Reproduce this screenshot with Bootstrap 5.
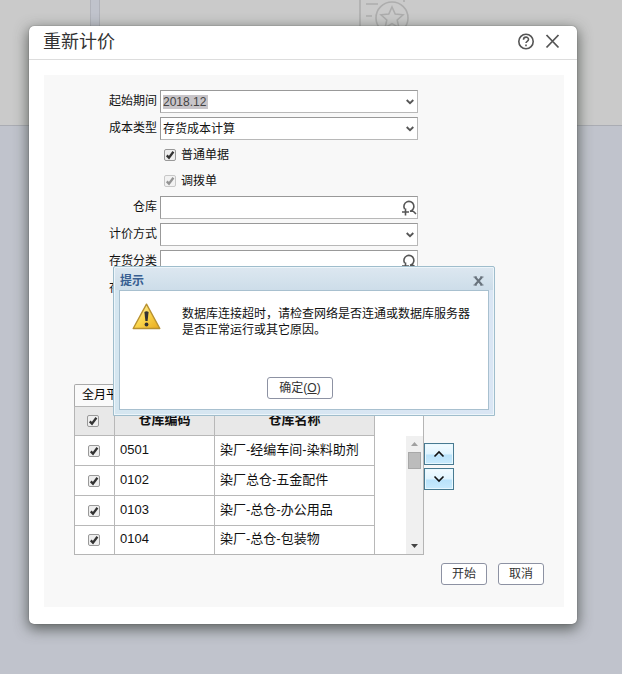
<!DOCTYPE html>
<html lang="zh-CN">
<head>
<meta charset="utf-8">
<meta name="viewport" content="width=device-width, initial-scale=1">
<title>重新计价</title>
<link href="https://cdn.jsdelivr.net/npm/bootstrap@5.3.0/dist/css/bootstrap.min.css" rel="stylesheet">
<style>
body{background:#c0c3cc;font:12px/16px "Liberation Sans","Noto Sans CJK SC",sans-serif;color:#111;min-height:100vh}
.backdrop-strip{z-index:0}
.pane{background:#cacaca;border-bottom:1px solid #aaacb3;height:126px}
.pane-left{width:91px;border-right:1px solid #b0b2ba}
.pane-right{border-left:1px solid #b0b2ba;padding-left:259px}
.page-wrap{padding:26px 45px 50px 29px}
.main-dialog{background:#fff;border-radius:5px;box-shadow:0 0 1px #444,0 4px 14px 1px rgba(50,55,50,.7);z-index:1}
.main-head{height:34px;border-bottom:1px solid #ddd;padding:0 15px 2px 14px}
.main-head h1{font-size:18px;line-height:28px;color:#333}
.icon-btn{border:0;background:none;padding:0;display:flex}
.main-body{padding:15px 13px 17px 15px}
.form-panel{background:#f8f8f8;padding:15px 20px 22px 0}
.field-rows{gap:4px;padding-right:126px}
.field-row{gap:3px}
.field-row>label{width:113px;text-align:right;line-height:22px;flex:none}
.field-row>.ctl{flex:1;min-width:0;height:23px;border:1px solid #b8b8b8;border-top-color:#999;border-left-color:#999;border-radius:0;padding:1px 24px 0 2px;font-size:12px;line-height:20px;color:#111;background-color:#fff}
.ctl-select{background:url("data:image/svg+xml,%3Csvg xmlns='http://www.w3.org/2000/svg' viewBox='0 0 8 6'%3E%3Cpath d='M.7 1 4 4.2 7.3 1' fill='none' stroke='%23555' stroke-width='1.8'/%3E%3C/svg%3E") no-repeat right 3px center/8px 6px}
.field-row>.ctl-marked{color:#444;background:url("data:image/svg+xml,%3Csvg xmlns='http://www.w3.org/2000/svg' viewBox='0 0 8 6'%3E%3Cpath d='M.7 1 4 4.2 7.3 1' fill='none' stroke='%23555' stroke-width='1.8'/%3E%3C/svg%3E") no-repeat right 3px center/8px 6px,linear-gradient(#c8c5c9,#c8c5c9) no-repeat 2px 4px/45px 14px,#fff}
.lookup-btn{right:1px;top:4px}
.tick-row{height:22px;padding-left:120px;gap:5px}
.tick{appearance:none;width:12px;height:12px;margin:0;flex:none;border:1px solid #999;border-radius:2px;background:#eee url("data:image/svg+xml,%3Csvg xmlns='http://www.w3.org/2000/svg' viewBox='0 0 10 10'%3E%3Cpath d='M1.8 5.4 4 7.8 8.4 1.8' fill='none' stroke='%23333' stroke-width='2.3'/%3E%3C/svg%3E") center/10px}
.tick:disabled{opacity:.5}
.grid-area{margin:84px 90px 0 30px}
.tab-btn{height:22px;border:1px solid #aaa;border-bottom:0;border-radius:2px 2px 0 0;background:#fafafa;padding:0 7px 2px;font-size:12px}
.grid-frame{border:1px solid #b5b5b5;background:#fff}
.grid-table{font-size:13px;line-height:18px;border-collapse:separate;border-spacing:0;table-layout:fixed;margin-right:31px}
.grid-table th,.grid-table td{height:30px;padding:0 5px 2px;border-right:1px solid #b8b8b8;border-bottom:1px solid #b8b8b8;white-space:nowrap}
.grid-table th{background:#e8e8e8;text-align:center;height:29px}
.grid-table tbody tr:last-child td{border-bottom:0;height:28px}
.grid-table th:first-child{padding:0 0 0 12px}
.grid-table td:first-child{padding:0 0 0 13px}
.col-check{width:40px}.col-code{width:100px}
.track{width:17px;margin-top:29px;background:#f0f0f0;padding:6px 2px}
.thumb{width:13px;height:17px;margin-top:6px;background:#bcbcbc;border:1px solid #a8a8a8}
.order-btns{gap:3px;margin-top:59px}
.order-btn{width:30px;height:22px;border:1px solid #487a91;box-shadow:inset 0 0 0 1px #e8f8ff;background:linear-gradient(#f3fbff 0,#dff4ff 52%,#b9e2fa 53%,#c8eafd);padding:0}
.foot-btns{gap:11px;margin-top:8px}
.soft-btn{height:22px;border:1px solid #8d92a3;border-radius:3px;background:#fff;font-size:12px;line-height:20px;color:#333;padding:0 10px}
.prompt{left:84px;right:82px;top:240px;z-index:5;border:1px solid #9fbdcc;border-radius:2px 2px 0 0;background:linear-gradient(90deg,#d5e6f0,#dae6f4);padding:0 5px 5px;box-shadow:inset 0 0 0 1px #edf5fa}
.prompt-head{height:22px;padding:4px 9px 0 5px;background:linear-gradient(#dce7f0,#cddde9);margin:1px -4px 0}
.prompt-head h2{font-size:12px;line-height:18px;color:#385f91}
.prompt-body{background:#fff;border:1px solid #a8c0cf;padding:12px 16px 10px 12px}
.prompt-body p{line-height:16px;padding-top:3px}
.prompt-msg{gap:21px}
.ok-btn{margin-top:39px;margin-right:4px;padding:0 11px}
</style>
<script src="https://cdn.jsdelivr.net/npm/bootstrap@5.3.0/dist/js/bootstrap.bundle.min.js"></script>
</head>
<body>
<div class="backdrop-strip position-absolute top-0 start-0 w-100 d-flex" aria-hidden="true">
  <div class="pane pane-left me-2"></div>
  <div class="pane pane-right flex-grow-1">
    <svg width="54" height="30" viewBox="0 0 54 30" fill="none" stroke="#adadad" stroke-width="1.6"><path d="M1 0V30M7 4H19M7 16H13M45 0V2"/><circle cx="33" cy="18" r="16"/><path d="m33 7 3.200 7 7.800.8-5.800 5.200 1.700 7.600-6.900-4-6.900 4 1.700-7.600L22 14.800l7.800-.8z"/></svg>
  </div>
</div>
<div class="page-wrap">
<main class="main-dialog position-relative">
  <header class="main-head d-flex align-items-center justify-content-between">
    <h1 class="m-0 fw-normal">重新计价</h1>
    <div class="d-flex align-items-center gap-2">
      <button class="icon-btn" type="button" aria-label="帮助"><svg width="18" height="18" viewBox="0 0 18 18" fill="none" stroke="#555" stroke-width="1.600"><circle cx="9" cy="8.500" r="7.200"/><path d="M6.500 6.700C6.500 3.200 11.600 3.400 11.500 6.500c0 1.800-2.500 1.900-2.500 3.600M9 11.500v1.700"/></svg></button>
      <button class="icon-btn" type="button" aria-label="关闭"><svg width="19" height="17" viewBox="0 0 19 17" fill="none" stroke="#555" stroke-width="1.800"><path d="m3.500 2 12 12.500M15.500 2l-12 12.500"/></svg></button>
    </div>
  </header>
  <div class="main-body">
    <form class="form-panel">
      <div class="field-rows d-flex flex-column">
        <div class="field-row d-flex"><label for="period">起始期间</label><select id="period" class="form-select ctl ctl-marked"><option>2018.12</option></select></div>
        <div class="field-row d-flex"><label for="costType">成本类型</label><select id="costType" class="form-select ctl ctl-select"><option>存货成本计算</option></select></div>
        <div class="tick-row d-flex align-items-center"><input class="tick" type="checkbox" id="normalDoc" checked><label for="normalDoc">普通单据</label></div>
        <div class="tick-row d-flex align-items-center"><input class="tick" type="checkbox" id="transferDoc" checked disabled><label for="transferDoc">调拨单</label></div>
        <div class="field-row d-flex position-relative"><label for="warehouse">仓库</label><input id="warehouse" type="text" class="form-control ctl"><button type="button" class="icon-btn lookup-btn position-absolute" aria-label="查找仓库"><svg width="16" height="16" viewBox="0 0 16 16" fill="none" stroke="#555" stroke-width="1.600"><path d="M3.600 9A5 5 0 1 1 9 11.300H12M12 11l3 3M4.500 8.500v7M1 12h7"/></svg></button></div>
        <div class="field-row d-flex"><label for="method">计价方式</label><select id="method" class="form-select ctl ctl-select"><option></option></select></div>
        <div class="field-row d-flex position-relative"><label for="category">存货分类</label><input id="category" type="text" class="form-control ctl"><button type="button" class="icon-btn lookup-btn position-absolute" aria-label="查找存货分类"><svg width="16" height="16" viewBox="0 0 16 16" fill="none" stroke="#555" stroke-width="1.600"><path d="M3.600 9A5 5 0 1 1 9 11.300H12M12 11l3 3M4.500 8.500v7M1 12h7"/></svg></button></div>
        <div class="field-row d-flex"><label for="stock">存货名称</label><input id="stock" type="text" class="form-control ctl"></div>
      </div>
      <div class="grid-area d-flex">
        <div class="flex-grow-1">
          <button type="button" class="tab-btn d-block">全月平均</button>
          <div class="grid-frame d-flex">
            <table class="grid-table flex-grow-1">
              <colgroup><col class="col-check"><col class="col-code"><col></colgroup>
              <thead><tr><th><input class="tick d-block" type="checkbox" checked aria-label="全选"></th><th>仓库编码</th><th>仓库名称</th></tr></thead>
              <tbody>
                <tr><td><input class="tick d-block" type="checkbox" checked aria-label="0501"></td><td>0501</td><td>染厂-经编车间-染料助剂</td></tr>
                <tr><td><input class="tick d-block" type="checkbox" checked aria-label="0102"></td><td>0102</td><td>染厂总仓-五金配件</td></tr>
                <tr><td><input class="tick d-block" type="checkbox" checked aria-label="0103"></td><td>0103</td><td>染厂-总仓-办公用品</td></tr>
                <tr><td><input class="tick d-block" type="checkbox" checked aria-label="0104"></td><td>0104</td><td>染厂-总仓-包装物</td></tr>
              </tbody>
            </table>
            <div class="track d-flex flex-column align-items-center">
              <svg width="7" height="4"><path d="M0 4 3.500 0 7 4z" fill="#a0a0a0"/></svg>
              <div class="thumb"></div>
              <svg class="mt-auto" width="7" height="4"><path d="M0 0h7L3.500 4z" fill="#444"/></svg>
            </div>
          </div>
        </div>
        <div class="order-btns d-flex flex-column">
          <button type="button" class="order-btn d-flex align-items-center justify-content-center" aria-label="上移"><svg width="12" height="8" viewBox="0 0 12 8" fill="none" stroke="#111" stroke-width="1.600"><path d="m1.500 6.500 4.500-4.500 4.500 4.500"/></svg></button>
          <button type="button" class="order-btn d-flex align-items-center justify-content-center" aria-label="下移"><svg width="12" height="8" viewBox="0 0 12 8" fill="none" stroke="#111" stroke-width="1.600"><path d="m1.500 1.500 4.500 4.500 4.500-4.500"/></svg></button>
        </div>
      </div>
      <div class="foot-btns d-flex justify-content-end"><button type="button" class="soft-btn">开始</button><button type="button" class="soft-btn">取消</button></div>
    </form>
  </div>
  <section class="prompt position-absolute" role="alertdialog" aria-labelledby="promptTitle">
    <div class="prompt-head d-flex justify-content-between align-items-center">
      <h2 id="promptTitle" class="m-0 fw-bold">提示</h2>
      <button type="button" class="icon-btn" aria-label="关闭提示"><svg width="11" height="10" viewBox="0 0 11 10" fill="none" stroke="#68727c"><path stroke-width="2" d="m2 1 7 8M9 1 2 9"/><path d="M.5 1h3.500M7 1h3.500M.5 9h3.500M7 9h3.500"/></svg></button>
    </div>
    <div class="prompt-body">
      <div class="prompt-msg d-flex">
        <svg class="flex-shrink-0" width="29" height="28" viewBox="0 0 29 28"><defs><linearGradient id="warnFill" x2="1" y2="1"><stop offset="0" stop-color="#fff6c0"/><stop offset=".5" stop-color="#fbd64d"/><stop offset="1" stop-color="#e8a91c"/></linearGradient></defs><path d="M14.500 1.200 27.800 25.500H1.200z" fill="url(#warnFill)" stroke="#b89130" stroke-width="1.400" stroke-linejoin="round"/><path d="M12.400 9q2.100-1.500 4.200 0l-1 9h-2.200z" fill="#333"/><circle cx="14.500" cy="21.500" r="1.900" fill="#333"/></svg>
        <p class="m-0">数据库连接超时，请检查网络是否连通或数据库服务器是否正常运行或其它原因。</p>
      </div>
      <div class="text-center"><button type="button" class="soft-btn ok-btn">确定(<u>O</u>)</button></div>
    </div>
  </section>
</main>
</div>
</body>
</html>
